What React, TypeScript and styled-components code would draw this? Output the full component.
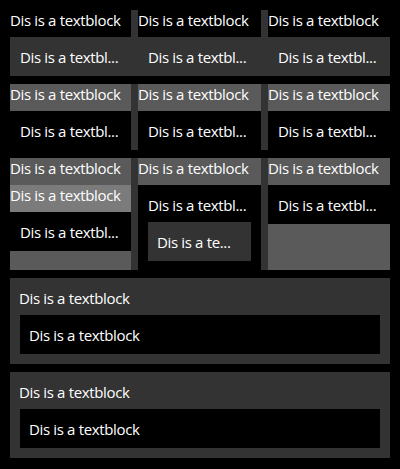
import React from "react";
import styled, { createGlobalStyle } from "styled-components";

const GlobalStyle = createGlobalStyle`
  html, body {
    margin: 0;
    padding: 0;
    background: #000;
  }
  body {
    font-family: "Open Sans", "Noto Sans", sans-serif;
    font-size: 15px;
    line-height: 20px;
    letter-spacing: -0.35px;
    color: #fff;
  }
`;

const COLS = "121px 7px 123px 7px 122px";

const Page = styled.div`
  width: 400px;
  height: 469px;
  box-sizing: border-box;
  padding: 10px;
  display: flex;
  flex-direction: column;
  gap: 8px;
  background: #000;
  overflow: hidden;
`;

const Grid = styled.div<{ $rows: string }>`
  display: grid;
  grid-template-columns: ${COLS};
  grid-template-rows: ${(p) => p.$rows};
`;

const Separator = styled.div<{ $col: number; $span: number }>`
  background: #333;
  grid-column: ${(p) => p.$col};
  grid-row: 1 / span ${(p) => p.$span};
`;

const Header = styled.div<{ $bg?: string; $col?: number }>`
  height: 27px;
  box-sizing: border-box;
  grid-column: ${(p) => p.$col ?? "auto"};
  grid-row: ${(p) => (p.$col ? 1 : "auto")};
  background: ${(p) => p.$bg ?? "transparent"};
  white-space: nowrap;
  overflow: hidden;
`;

const Strip = styled.div`
  grid-column: 1 / -1;
  grid-row: 2;
  display: grid;
  grid-template-columns: ${COLS};
  background: #333;
`;

const Cell = styled.div<{ $bg?: string; $pb?: number; $col?: number; $row?: number }>`
  padding: 10px 10px ${(p) => p.$pb ?? 9}px 10px;
  grid-column: ${(p) => p.$col ?? "auto"};
  grid-row: ${(p) => p.$row ?? "auto"};
  background: ${(p) => p.$bg ?? "transparent"};
  white-space: nowrap;
  overflow: hidden;
`;

const Column = styled.div<{ $col: number }>`
  display: flex;
  flex-direction: column;
  grid-column: ${(p) => p.$col};
  grid-row: 1;
`;

const Filler = styled.div<{ $bg: string }>`
  flex: 1;
  background: ${(p) => p.$bg};
`;

const Box = styled.div`
  margin: 0 10px;
  height: 39px;
  box-sizing: border-box;
  padding: 10px 9px;
  background: #333;
  white-space: nowrap;
  overflow: hidden;
`;

const Panel = styled.div`
  background: #333;
  padding: 10px 10px 10px 9px;
  display: flex;
  flex-direction: column;
`;

const PanelTitle = styled.div`
  height: 27px;
`;

const PanelBody = styled.div`
  margin-left: 1px;
  height: 39px;
  box-sizing: border-box;
  padding: 10px 9px;
  background: #000;
`;

const FULL = "Dis is a textblock";
const TRIM = "Dis is a textbl...";

export default function App() {
  return (
    <>
      <GlobalStyle />
      <Page>
        <Grid $rows="27px 39px">
          <Header $col={1}>{FULL}</Header>
          <Separator $col={2} $span={1} />
          <Header $col={3}>{FULL}</Header>
          <Separator $col={4} $span={1} />
          <Header $col={5}>{FULL}</Header>
          <Strip>
            <Cell $col={1}>{TRIM}</Cell>
            <Cell $col={3}>{TRIM}</Cell>
            <Cell $col={5}>{TRIM}</Cell>
          </Strip>
        </Grid>

        <Grid $rows="27px 39px">
          <Header $col={1} $bg="#5a5a5a">{FULL}</Header>
          <Separator $col={2} $span={2} />
          <Header $col={3} $bg="#5a5a5a">{FULL}</Header>
          <Separator $col={4} $span={2} />
          <Header $col={5} $bg="#5a5a5a">{FULL}</Header>
          <Cell $col={1} $row={2}>{TRIM}</Cell>
          <Cell $col={3} $row={2}>{TRIM}</Cell>
          <Cell $col={5} $row={2}>{TRIM}</Cell>
        </Grid>

        <Grid $rows="112px">
          <Column $col={1}>
            <Header $bg="#5a5a5a">{FULL}</Header>
            <Header $bg="#7b7b7b">{FULL}</Header>
            <Cell>{TRIM}</Cell>
            <Filler $bg="#5a5a5a" />
          </Column>
          <Separator $col={2} $span={1} />
          <Column $col={3}>
            <Header $bg="#5a5a5a">{FULL}</Header>
            <Cell $pb={7}>{TRIM}</Cell>
            <Box>Dis is a te...</Box>
            <Filler $bg="#000" />
          </Column>
          <Separator $col={4} $span={1} />
          <Column $col={5}>
            <Header $bg="#5a5a5a">{FULL}</Header>
            <Cell>{TRIM}</Cell>
            <Filler $bg="#5a5a5a" />
          </Column>
        </Grid>

        <Panel>
          <PanelTitle>{FULL}</PanelTitle>
          <PanelBody>{FULL}</PanelBody>
        </Panel>

        <Panel>
          <PanelTitle>{FULL}</PanelTitle>
          <PanelBody>{FULL}</PanelBody>
        </Panel>
      </Page>
    </>
  );
}
